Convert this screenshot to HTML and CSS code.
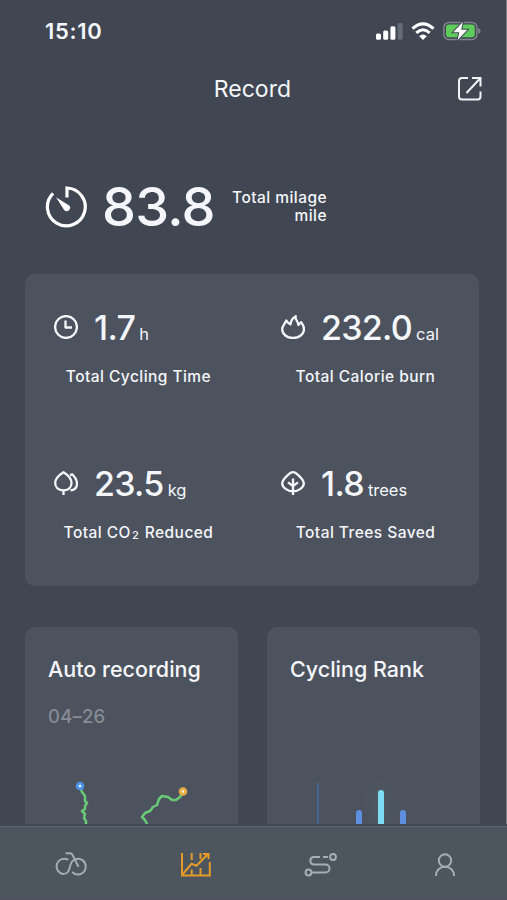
FILE: index.html
```
<!DOCTYPE html>
<html lang="en">
  <head>
    <meta charset="UTF-8" />
    <meta name="viewport" content="width=device-width, initial-scale=1.0" />
    <title>Record</title>
    <link rel="stylesheet" href="styles.css">
  </head>
  <body>
    <div class="screen">
      <!-- Status bar -->
      <div class="status-bar">
        <span class="time">15:10</span>
        <div class="status-icons">
          <svg class="signal" width="27" height="18" viewBox="0 0 27 18">
            <rect x="0" y="11.5" width="5" height="6.3" rx="1.5" fill="#fff" />
            <rect x="7.2" y="8.5" width="5" height="9.3" rx="1.5" fill="#fff" />
            <rect x="14.4" y="4.3" width="5" height="13.5" rx="1.5" fill="#fff" />
            <rect x="21.6" y="1" width="5" height="16.8" rx="1.5" fill="#666c75" />
          </svg>
          <svg class="wifi" width="24" height="18" viewBox="0 0 24 18">
            <path d="M1.500 6.6 Q12 -2.8 22.500 6.6" fill="none" stroke="#fff" stroke-width="3.2" />
            <path d="M5.3 10.9 Q12 4.7 18.7 10.9" fill="none" stroke="#fff" stroke-width="3" />
            <path d="M12 18 L8.2 14.2 Q12 10.7 15.8 14.2 Z" fill="#fff" />
          </svg>
          <svg class="battery" width="38" height="20" viewBox="0 0 38 20">
            <rect x="0.9" y="1.4" width="33" height="17" rx="5" fill="none" stroke="#7e848c" stroke-width="1.5" />
            <rect x="3" y="3.5" width="28.8" height="12.8" rx="3" fill="#5ecb5d" />
            <path d="M35.2 7 Q37.6 8 37.6 9.9 T35.2 12.8 Z" fill="#7e848c" />
            <path d="M19.8 1 L10.2 11.2 H16.3 L14.6 19 L24.4 8.7 H18.2 Z" fill="#fff" stroke="#414752" stroke-width="2" paint-order="stroke" />
          </svg>
        </div>
      </div>

      <!-- Header -->
      <header class="header">
        <h1>Record</h1>
        <svg class="share" width="26" height="26" viewBox="0 0 26 26">
          <path d="M11 2 H5 Q2 2 2 5 V20.500 Q2 23.500 5 23.500 H20.500 Q23.500 23.500 23.500 20.500 V15.500 M15 2 H23.500 V10.500 M23 2.500 L9.500 17" />
        </svg>
      </header>

      <!-- Total distance -->
      <section class="total">
        <svg class="dial" width="42" height="42" viewBox="0 0 42 42">
          <path d="M8.100 7.400 A18.900 18.900 0 1 0 22 2 V11.500" fill="none" stroke="#fff" stroke-width="3.200" />
          <path d="M11 11.300 L24.200 19.500 A3.400 3.400 0 0 1 19.300 24.200 Z" fill="#fff" />
        </svg>
        <span class="total-value">83.8</span>
        <p class="total-label">Total milage<br />mile</p>
      </section>

      <!-- Stats -->
      <section class="card stats">
        <div class="stat">
          <div class="stat-main">
            <svg class="stat-icon" width="24" height="24" viewBox="0 0 24 24">
              <circle cx="12" cy="12" r="10.900" />
              <path d="M11.500 5.500 V12.500 H18" />
            </svg>
            <span class="value">1.7</span><span class="unit">h</span>
          </div>
          <p class="stat-label">Total Cycling Time</p>
        </div>
        <div class="stat">
          <div class="stat-main">
            <svg class="stat-icon" width="24" height="24" viewBox="0 0 24 24">
              <path d="M5.300 5.400 C4.300 8.600 1.200 10.600 1.200 14.300 C1.200 19.300 6 23 12 23 S23 19.300 23 14.300 C23 10.800 21.400 8.800 20.200 7.200 L17.400 10 C17.200 6 13.800 4.800 14.700 1.200 C11.600 3 9.800 5.600 9.500 9.300 C7.300 8.700 6.800 7.300 5.300 5.400 Z" />
            </svg>
            <span class="value">232.0</span><span class="unit">cal</span>
          </div>
          <p class="stat-label">Total Calorie burn</p>
        </div>
        <div class="stat">
          <div class="stat-main">
            <svg class="stat-icon" width="24" height="24" viewBox="0 0 24 24">
              <path d="M9.500 1.200 C5 4 1.200 8 1.200 12 C1.200 16.500 4.600 19.300 9.500 19.300 S17.500 16.500 17.500 12 C17.500 8 14 4 9.500 1.200 Z M9.500 19.300 V24 M16 4 L18.500 3.500 C21.500 6.500 23 9.500 23 12.500 C23 16.500 20.500 19 16.500 19.300" />
            </svg>
            <span class="value">23.5</span><span class="unit">kg</span>
          </div>
          <p class="stat-label">Total CO<span class="sub">2</span> Reduced</p>
        </div>
        <div class="stat">
          <div class="stat-main">
            <svg class="stat-icon" width="24" height="24" viewBox="0 0 24 24">
              <path d="M12 1.200 C9 1.200 1.200 8.500 1.200 12.500 C1.200 16.300 6.500 20.300 12 20.300 S22.800 16.300 22.800 12.500 C22.800 8.500 15 1.200 12 1.200 Z M12 7.500 V24.500 M7 11.300 L12 15 L17 11.300" />
            </svg>
            <span class="value">1.8</span><span class="unit">trees</span>
          </div>
          <p class="stat-label">Total Trees Saved</p>
        </div>
      </section>

      <!-- Bottom cards -->
      <section class="panels">
        <div class="card panel">
          <h2>Auto recording</h2>
          <p class="date">04–26</p>
          <svg class="routes" width="213" height="60" viewBox="0 0 213 60">
            <g fill="none" stroke="#68c977" stroke-width="2.500" stroke-linejoin="round">
              <path d="M55 12 L57 17 L60 21 L60 26 L62 28 L60 31 L60 34 L57 36 L60 39 L59 43 L61 46 L61 60" />
              <path d="M158 17 L155 22 L151 25 L147 25 L143 22 L137 21 L134 24 L132 30 L128 32 L125 36 L120 38 L117 42 L120 45 L122 49 V60" />
            </g>
            <circle cx="55" cy="11" r="2.800" fill="#fff" stroke="#4d94e8" stroke-width="3" />
            <circle cx="158" cy="16.500" r="2.800" fill="#fff" stroke="#e7ac45" stroke-width="3" />
          </svg>
        </div>
        <div class="card panel">
          <h2>Cycling Rank</h2>
          <div class="rank-chart">
            <span class="axis"></span>
            <span class="bar"></span>
            <span class="bar top"></span>
            <span class="bar"></span>
          </div>
        </div>
      </section>

      <!-- Tab bar -->
      <nav class="tabs">
        <a class="tab">
          <svg width="34" height="26" viewBox="0 0 34 26">
            <path d="M14.200 7.800 A7.700 7.700 0 1 0 9 22 C18.500 22 13.500 9.500 21 7.400 C27 5.400 32 9.500 31.700 14.700 C31.400 22 23 25 18.300 20 M11.500 1.200 H16 Q17.500 1.200 18.200 2.400 L24.500 14.700" />
          </svg>
        </a>
        <a class="tab active">
          <svg width="34" height="26" viewBox="0 0 34 26">
            <path d="M3 1 V23.500 H30.800 V10 M3.500 22.500 L12.500 11.800 L17.500 13.800 L29 2 M24 2 H29.500 V7 M12.700 1 V8 M21.500 1 V7 M12.700 17.500 V22.500 M21.500 16 V22.500" />
          </svg>
        </a>
        <a class="tab">
          <svg width="34" height="26" viewBox="0 0 34 26">
            <circle cx="4.500" cy="20.500" r="2.900" />
            <circle cx="29" cy="5" r="2.900" />
            <path d="M8 20.500 H21.500 A4 4 0 0 0 21.500 12.500 H9.500 A3.800 3.800 0 0 1 9.500 5 H16 M19 5 H24" />
          </svg>
        </a>
        <a class="tab">
          <svg width="34" height="26" viewBox="0 0 34 26">
            <circle cx="17" cy="8.500" r="6.200" />
            <path d="M7.900 24 C7.900 18.500 12 14.700 17 14.700 S26.100 18.500 26.100 24" />
          </svg>
        </a>
      </nav>
    </div>
  </body>
</html>
```
FILE: styles.css
```
* {
  box-sizing: border-box;
}

body {
  margin: 0;
  background: #414752;
  color: #f4f6fa;
  font-family: Inter, "Liberation Sans", sans-serif;
}

h1,
h2,
p {
  margin: 0;
}

svg {
  display: block;
  flex-shrink: 0;
}

.screen {
  display: flex;
  flex-direction: column;
  height: 900px;
  overflow: hidden;
  background: linear-gradient(#7c8188, #7c8188) right top / 1px 824px no-repeat;
}

/* Status bar */
.status-bar {
  display: flex;
  justify-content: space-between;
  align-items: center;
  height: 62px;
  padding: 0 26px 0 45px;
}

.time {
  font-size: 22px;
  font-weight: 600;
  letter-spacing: 0.7px;
}

.status-icons {
  display: flex;
  align-items: center;
}

.wifi {
  margin: 0 8px 0 8px;
}

/* Header */
.header {
  display: flex;
  align-items: center;
  justify-content: flex-end;
  height: 54px;
  padding-right: 24px;
}

.header h1 {
  margin-right: 166px;
  font-size: 23px;
  font-weight: 400;
  line-height: 28px;
}

.share {
  fill: none;
  stroke: #f0f2f5;
  stroke-width: 2;
}

/* Total distance */
.total {
  display: flex;
  align-items: center;
  height: 158px;
  padding: 24px 0 0 45px;
}

.total-value {
  width: 112px;
  margin-left: 15px;
  font-size: 54px;
  font-weight: 500;
  line-height: 60px;
  letter-spacing: -0.7px;
}

.total-label {
  width: 96px;
  margin-left: 17px;
  font-size: 15.5px;
  font-weight: 500;
  line-height: 18px;
  letter-spacing: 0.45px;
  text-align: right;
  white-space: nowrap;
}

/* Cards */
.card {
  border-radius: 10px;
  background: #4d535e;
}

.stats {
  display: grid;
  grid-template-columns: 227px 227px;
  grid-template-rows: 156px 156px;
  flex-shrink: 0;
  width: 454px;
  margin-left: 25px;
}

.stat {
  padding-top: 34px;
}

.stat-main {
  display: flex;
  align-items: baseline;
  height: 40px;
  padding-left: 29px;
  line-height: 40px;
}

.stat-icon {
  align-self: center;
  margin: -2px 16px 0 0;
  fill: none;
  stroke: #f4f6fa;
  stroke-width: 2.3;
  stroke-linejoin: round;
}

.value {
  font-size: 34px;
  font-weight: 500;
  letter-spacing: -0.7px;
}

.unit {
  margin-left: 4px;
  font-size: 16.5px;
}

.stat-label {
  margin-top: 19px;
  font-size: 15.5px;
  font-weight: 500;
  line-height: 20px;
  letter-spacing: 0.45px;
  text-align: center;
}

.sub {
  display: inline-block;
  margin: 0 1px;
  font-size: 11px;
  transform: translateY(1px);
}

/* Bottom cards */
.panels {
  display: flex;
  flex: 1;
  gap: 29px;
  padding: 41px 27px 2px 25px;
  min-height: 0;
}

.panel {
  width: 213px;
  padding-top: 28px;
  border-radius: 10px 10px 0 0;
  overflow: hidden;
}

.panel h2 {
  padding-left: 23px;
  font-size: 21.5px;
  font-weight: 500;
  line-height: 28px;
  white-space: nowrap;
}

.date {
  margin-top: 21px;
  padding-left: 23px;
  font-size: 18.5px;
  font-weight: 500;
  line-height: 24px;
  letter-spacing: 0.2px;
  color: #868b94;
}

.routes {
  margin-top: 47px;
}

.rank-chart {
  display: flex;
  align-items: flex-end;
  height: 42px;
  margin-top: 100px;
  padding-left: 50px;
}

.axis {
  width: 2px;
  height: 42px;
  margin-right: 37px;
  background: #46658f;
}

.bar {
  width: 6px;
  height: 15px;
  border-radius: 3px 3px 0 0;
  background: #5f8fe0;
}

.bar.top {
  height: 35px;
  margin: 0 16px;
  background: #7edcf2;
  box-shadow: 0 0 18px rgba(94, 160, 170, 0.3);
}

/* Tab bar */
.tabs {
  display: flex;
  flex-shrink: 0;
  height: 74px;
  padding: 0 0 0 8px;
  border-top: 1px solid #5c6a74;
  border-bottom: 1px solid #514c60;
  background: #4d565f;
}

.tab {
  width: 125px;
  padding: 25px 0 0 46px;
}

.tab svg {
  fill: none;
  stroke: #a5adb5;
  stroke-width: 2;
}

.tab.active svg {
  stroke: #e39a29;
}
```
